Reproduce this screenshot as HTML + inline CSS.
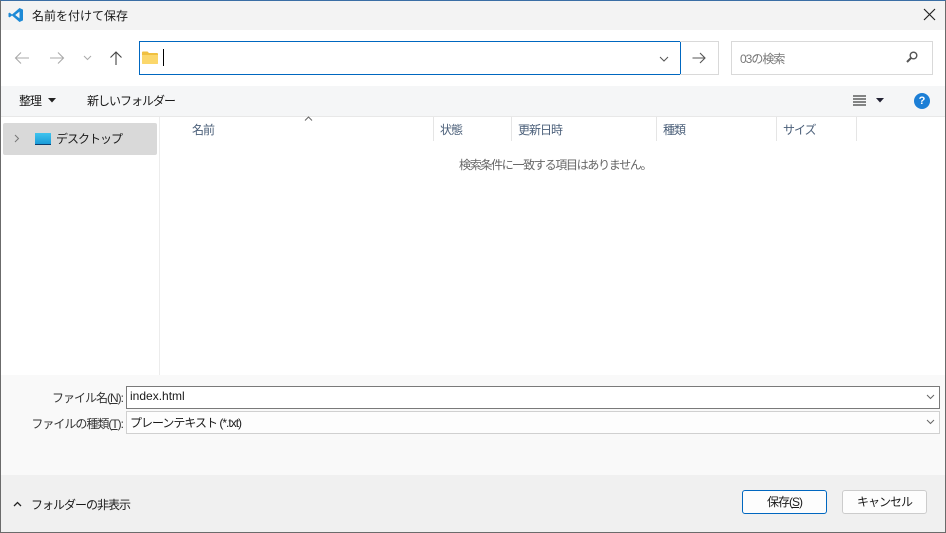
<!DOCTYPE html>
<html><head><meta charset="utf-8"><style>
*{box-sizing:border-box;margin:0;padding:0}
body{width:946px;height:533px;overflow:hidden;font-family:"Liberation Sans","Noto Sans CJK JP",sans-serif;font-size:12px;color:#1a1a1a;background:#fff;position:relative;letter-spacing:-1px}
.abs{position:absolute}
.t{white-space:nowrap}
</style></head><body>
<!-- title -->
<div class="abs" style="left:0;top:0;width:946px;height:30px;background:#f3f3f3"></div>
<svg class="abs" style="left:8px;top:7px" width="16" height="16" viewBox="0 0 16 16"><path d="M11.5 1 L15 2.6 V13.4 L11.5 15 L4 8.5 L1.6 10.4 L0.5 9.8 V6.2 L1.6 5.6 L4 7.5 Z M11.5 4.6 L7.2 8 L11.5 11.4 Z" fill="#1e8ad6" fill-rule="evenodd"/></svg>
<div class="abs t" style="left:32px;top:7px;letter-spacing:0">名前を付けて保存</div>
<svg class="abs" style="left:923px;top:8px" width="13" height="13" viewBox="0 0 13 13"><path d="M1 1L12 12M12 1L1 12" stroke="#222" stroke-width="1.2"/></svg>
<!-- nav -->
<svg class="abs" style="left:14px;top:51px" width="16" height="14" viewBox="0 0 16 14"><path d="M15 7H2M7 1.5L1.5 7L7 12.5" stroke="#aaa" fill="none" stroke-width="1.1"/></svg>
<svg class="abs" style="left:49px;top:51px" width="16" height="14" viewBox="0 0 16 14"><path d="M1 7H14M9 1.5L14.5 7L9 12.5" stroke="#aaa" fill="none" stroke-width="1.1"/></svg>
<svg class="abs" style="left:83px;top:55px" width="9" height="6" viewBox="0 0 9 6"><path d="M1 1L4.5 4.5L8 1" stroke="#aaa" fill="none"/></svg>
<svg class="abs" style="left:109px;top:50px" width="14" height="16" viewBox="0 0 14 16"><path d="M7 15V2M1.5 7.5L7 2L12.5 7.5" stroke="#444" fill="none" stroke-width="1.1"/></svg>
<div class="abs" style="left:139px;top:41px;width:542px;height:34px;border:1px solid #0067c0"></div>
<svg class="abs" style="left:142px;top:51px" width="16" height="13" viewBox="0 0 16 13"><path d="M0 1.5Q0 0.5 1 0.5H5.5L7 2H15Q16 2 16 3V12Q16 13 15 13H1Q0 13 0 12Z" fill="#f0c040"/><path d="M0 4H16V12Q16 13 15 13H1Q0 13 0 12Z" fill="#fbd76b"/></svg>
<div class="abs" style="left:163px;top:49px;width:1px;height:17px;background:#000"></div>
<svg class="abs" style="left:659px;top:56px" width="10" height="6" viewBox="0 0 10 6"><path d="M1 1L5 5L9 1" stroke="#555" fill="none"/></svg>
<div class="abs" style="left:680px;top:41px;width:39px;height:34px;border:1px solid #d9d9d9;border-left:none"></div>
<svg class="abs" style="left:692px;top:52px" width="14" height="12" viewBox="0 0 14 12"><path d="M0.5 6H13M8 1L13 6L8 11" stroke="#555" fill="none" stroke-width="1.1"/></svg>
<div class="abs" style="left:731px;top:41px;width:202px;height:34px;border:1px solid #d9d9d9"></div>
<div class="abs t" style="left:740px;top:50px;color:#777">03の検索</div>
<svg class="abs" style="left:906px;top:51px" width="12" height="12" viewBox="0 0 12 12"><circle cx="7.5" cy="4.5" r="3.3" stroke="#555" fill="none" stroke-width="1.4"/><path d="M5 7L1 11" stroke="#555" stroke-width="2"/></svg>
<!-- toolbar -->
<div class="abs" style="left:0;top:86px;width:946px;height:31px;background:#f5f6f7;border-bottom:1px solid #e8e8e8"></div>
<div class="abs t" style="left:19px;top:92px">整理</div>
<svg class="abs" style="left:48px;top:98px" width="8" height="5" viewBox="0 0 8 5"><path d="M0 0H8L4 4.5Z" fill="#222"/></svg>
<div class="abs t" style="left:87px;top:92px">新しいフォルダー</div>
<svg class="abs" style="left:853px;top:95px" width="13" height="11" viewBox="0 0 13 11"><path d="M0 1H13M0 4H13M0 7H13M0 10H13" stroke="#111" stroke-width="1.1"/></svg>
<svg class="abs" style="left:876px;top:98px" width="8" height="5" viewBox="0 0 8 5"><path d="M0 0H8L4 4.5Z" fill="#223"/></svg>
<div class="abs" style="left:914px;top:93px;width:16px;height:16px;border-radius:50%;background:#1c7fd6;color:#fff;font-weight:bold;font-size:11px;text-align:center;line-height:16px;letter-spacing:0">?</div>
<!-- left pane -->
<div class="abs" style="left:159px;top:117px;width:1px;height:258px;background:#ececec"></div>
<div class="abs" style="left:3px;top:123px;width:154px;height:32px;background:#d9d9d9;border-radius:2px"></div>
<svg class="abs" style="left:14px;top:134px" width="6" height="9" viewBox="0 0 6 9"><path d="M1 1L4.5 4.5L1 8" stroke="#777" fill="none"/></svg>
<div class="abs" style="left:35px;top:133px;width:16px;height:12px;background:linear-gradient(#3fc4ee,#1a9bd8);border-bottom:1px solid #0b3e6e"></div>
<div class="abs t" style="left:56px;top:130px">デスクトップ</div>
<!-- headers -->
<svg class="abs" style="left:304px;top:116px" width="9" height="5" viewBox="0 0 9 5"><path d="M1 4.5L4.5 1L8 4.5" stroke="#666" fill="none"/></svg>
<div class="abs t" style="left:192px;top:121px;color:#4c607a">名前</div>
<div class="abs" style="left:433px;top:117px;width:1px;height:24px;background:#e5e5e5"></div>
<div class="abs t" style="left:440px;top:121px;color:#4c607a">状態</div>
<div class="abs" style="left:511px;top:117px;width:1px;height:24px;background:#e5e5e5"></div>
<div class="abs t" style="left:518px;top:121px;color:#4c607a">更新日時</div>
<div class="abs" style="left:656px;top:117px;width:1px;height:24px;background:#e5e5e5"></div>
<div class="abs t" style="left:663px;top:121px;color:#4c607a">種類</div>
<div class="abs" style="left:776px;top:117px;width:1px;height:24px;background:#e5e5e5"></div>
<div class="abs t" style="left:783px;top:121px;color:#4c607a">サイズ</div>
<div class="abs" style="left:856px;top:117px;width:1px;height:24px;background:#e5e5e5"></div>
<div class="abs t" style="left:459px;top:156px;color:#666;letter-spacing:-1.3px">検索条件に一致する項目はありません。</div>
<!-- bottom -->
<div class="abs" style="left:0;top:375px;width:946px;height:100px;background:#f9f9f9"></div>
<div class="abs t" style="right:823px;top:389px;color:#333;text-align:right">ファイル名(<u>N</u>):</div>
<div class="abs" style="left:126px;top:386px;width:814px;height:23px;background:#fff;border:1px solid #7a7a7a"></div>
<div class="abs t" style="left:130px;top:389px;letter-spacing:0">index.html</div>
<svg class="abs" style="left:926px;top:394px" width="9" height="6" viewBox="0 0 9 6"><path d="M1 1L4.5 4.5L8 1" stroke="#666" fill="none"/></svg>
<div class="abs t" style="right:823px;top:415px;color:#333;text-align:right">ファイルの種類(<u>T</u>):</div>
<div class="abs" style="left:126px;top:411px;width:814px;height:23px;background:#fdfdfd;border:1px solid #d0d0d0"></div>
<div class="abs t" style="left:130px;top:414px">プレーンテキスト (*.txt)</div>
<svg class="abs" style="left:926px;top:419px" width="9" height="6" viewBox="0 0 9 6"><path d="M1 1L4.5 4.5L8 1" stroke="#666" fill="none"/></svg>
<div class="abs" style="left:0;top:475px;width:946px;height:58px;background:#f0f0f0"></div>
<svg class="abs" style="left:13px;top:501px" width="9" height="6" viewBox="0 0 9 6"><path d="M1 5L4.5 1.5L8 5" stroke="#222" fill="none" stroke-width="1.3"/></svg>
<div class="abs t" style="left:31px;top:496px">フォルダーの非表示</div>
<div class="abs" style="left:742px;top:490px;width:85px;height:24px;background:#fdfdfd;border:1px solid #0067c0;border-radius:3px;text-align:center;line-height:22px">保存(<u>S</u>)</div>
<div class="abs" style="left:842px;top:490px;width:85px;height:24px;background:#fdfdfd;border:1px solid #ccc;border-radius:3px;text-align:center;line-height:22px">キャンセル</div>
<!-- window border overlay -->
<div class="abs" style="left:0;top:0;width:946px;height:533px;border:1px solid #6b6b6b;border-top-color:#3a6ea5;pointer-events:none"></div>
</body></html>
